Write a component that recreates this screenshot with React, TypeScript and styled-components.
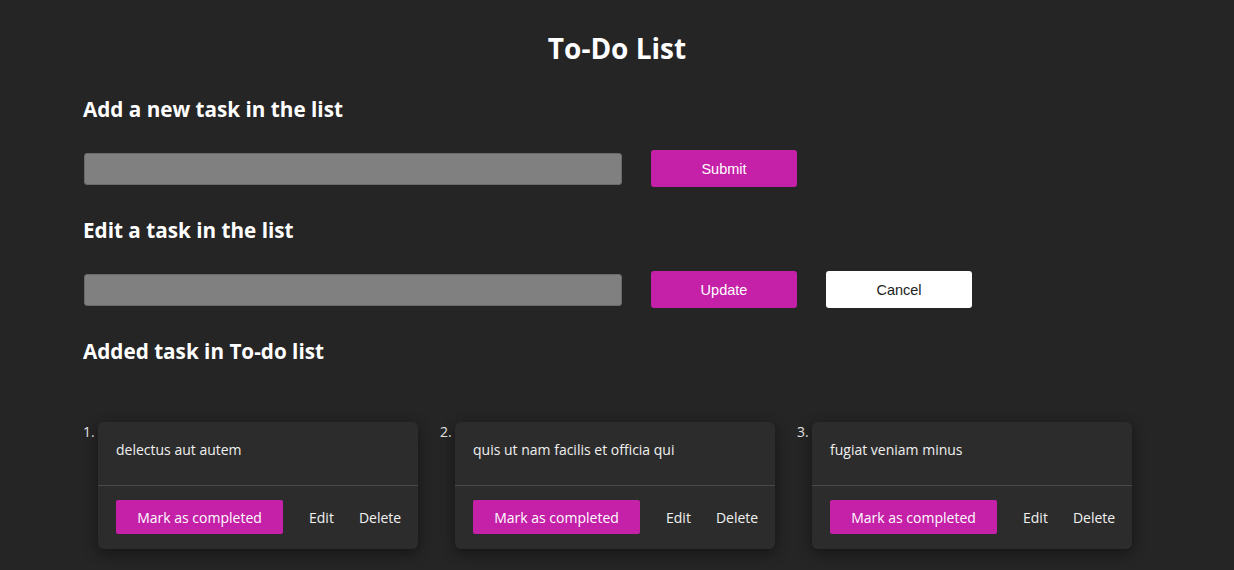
import React from "react";
import styled, { createGlobalStyle } from "styled-components";

const Global = createGlobalStyle`
  html, body { margin: 0; padding: 0; background: #252525; }
  body { font-family: "Open Sans", "Noto Sans", sans-serif; color: #fff; }
  * { box-sizing: border-box; }
`;

const Page = styled.div`
  min-height: 570px;
  padding: 28px 83px 0 83px;
`;

const Title = styled.h1`
  margin: 0;
  text-align: center;
  font-size: 28px;
  line-height: 40px;
  font-weight: 700;
`;

const Heading = styled.h2<{ $top: number }>`
  margin: ${(p) => p.$top}px 0 0 0;
  font-size: 20.7px;
  line-height: 26px;
  font-weight: 700;
`;

const FormRow = styled.div`
  display: flex;
  align-items: center;
  margin-top: 28px;
  gap: 29px;
`;

const Input = styled.input`
  width: 538px;
  height: 32px;
  margin-left: 1px;
  background: #808080;
  border: 1px solid #6a6a6a;
  border-radius: 3px;
  outline: none;
`;

const ActionButton = styled.button<{ $light?: boolean }>`
  width: 146px;
  height: 37px;
  border: none;
  border-radius: 3px;
  background: ${(p) => (p.$light ? "#ffffff" : "#c520a8")};
  color: ${(p) => (p.$light ? "#222" : "#fff")};
  font-family: "Liberation Sans", Arial, sans-serif;
  font-size: 14.5px;
  cursor: pointer;
`;

const List = styled.ol`
  list-style: none;
  margin: 58px 0 0 0;
  padding: 0;
  display: flex;
  gap: 22px;
`;

const Item = styled.li`
  display: flex;
  align-items: flex-start;
`;

const Num = styled.span`
  width: 15px;
  font-size: 14px;
  line-height: 20px;
  color: #e6e6e6;
`;

const Card = styled.div`
  width: 320px;
  background: #2c2c2c;
  border-radius: 6px;
  box-shadow: 0 4px 14px rgba(0, 0, 0, 0.45);
`;

const CardText = styled.div`
  height: 64px;
  padding: 18px 18px 0 18px;
  font-size: 14px;
  line-height: 20px;
  color: #f0f0f0;
  border-bottom: 1px solid #4a4a4a;
`;

const CardFooter = styled.div`
  display: flex;
  align-items: center;
  gap: 25px;
  padding: 14px 18px 15px 18px;
`;

const CompleteButton = styled.button`
  flex: 0 0 167px;
  height: 34px;
  border: none;
  border-radius: 2px;
  background: #c520a8;
  color: #fff;
  font-family: "Open Sans", "Noto Sans", sans-serif;
  font-size: 14px;
  margin-right: 1px;
`;

const TextButton = styled.button`
  flex: 0 0 auto;
  background: none;
  border: none;
  padding: 0;
  color: #f2f2f2;
  font-family: "Open Sans", "Noto Sans", sans-serif;
  font-size: 14px;
`;

const tasks = [
  "delectus aut autem",
  "quis ut nam facilis et officia qui",
  "fugiat veniam minus",
];

export default function App() {
  return (
    <>
      <Global />
      <Page>
        <Title>To-Do List</Title>
        <Heading $top={28}>Add a new task in the list</Heading>
        <FormRow>
          <Input />
          <ActionButton>Submit</ActionButton>
        </FormRow>
        <Heading $top={30}>Edit a task in the list</Heading>
        <FormRow>
          <Input />
          <ActionButton>Update</ActionButton>
          <ActionButton $light>Cancel</ActionButton>
        </FormRow>
        <Heading $top={30}>Added task in To-do list</Heading>
        <List>
          {tasks.map((t, i) => (
            <Item key={t}>
              <Num>{i + 1}.</Num>
              <Card>
                <CardText>{t}</CardText>
                <CardFooter>
                  <CompleteButton>Mark as completed</CompleteButton>
                  <TextButton>Edit</TextButton>
                  <TextButton>Delete</TextButton>
                </CardFooter>
              </Card>
            </Item>
          ))}
        </List>
      </Page>
    </>
  );
}
